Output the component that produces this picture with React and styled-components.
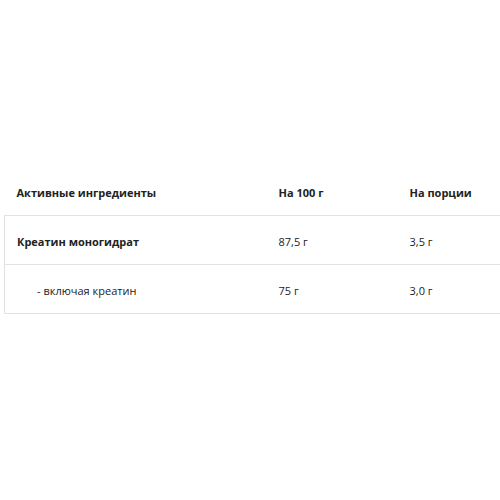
import React from "react";
import styled, { createGlobalStyle } from "styled-components";

const Global = createGlobalStyle`
  html, body { margin: 0; padding: 0; background: #fff; overflow: hidden; }
  body { font-family: "Open Sans", "Liberation Sans", sans-serif; color: #222; }
`;

const Page = styled.div`
  width: 500px;
  height: 500px;
  padding: 167px 0 0 4px;
  box-sizing: border-box;
  overflow: hidden;
`;

const Table = styled.table`
  border-collapse: collapse;
  width: 524px;
  table-layout: fixed;
  font-size: 11px;
`;

const Col = styled.col`
  width: ${(p) => p.$w}px;
`;

const Th = styled.th`
  text-align: left;
  font-weight: 700;
  height: 46px;
  padding: 2px 12px 0;
  border-bottom: 1px solid #e2e2e2;
`;

const Td = styled.td`
  height: 46px;
  padding: 2px 12px 0 ${(p) => (p.$indent ? 32 : 12)}px;
  font-weight: ${(p) => (p.$bold ? 700 : 400)};
  border-bottom: 1px solid #e2e2e2;
  border-left: ${(p) => (p.$first ? "1px solid #e2e2e2" : "none")};
`;

export default function App() {
  return (
    <>
      <Global />
      <Page>
        <Table>
          <colgroup>
            <Col $w={262} />
            <Col $w={131} />
            <Col $w={131} />
          </colgroup>
          <thead>
            <tr>
              <Th>Активные ингредиенты</Th>
              <Th>На 100 г</Th>
              <Th>На порции</Th>
            </tr>
          </thead>
          <tbody>
            <tr>
              <Td $first $bold>Креатин моногидрат</Td>
              <Td>87,5 г</Td>
              <Td>3,5 г</Td>
            </tr>
            <tr>
              <Td $first $indent>- включая креатин</Td>
              <Td>75 г</Td>
              <Td>3,0 г</Td>
            </tr>
          </tbody>
        </Table>
      </Page>
    </>
  );
}
